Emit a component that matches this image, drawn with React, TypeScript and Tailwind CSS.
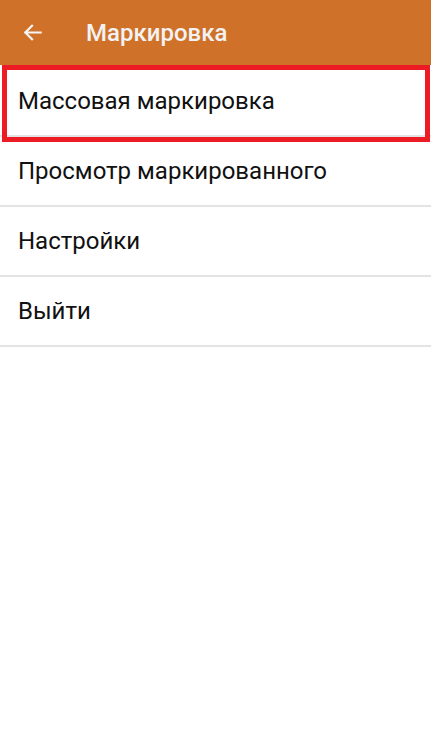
import React from "react";

const items = ["Массовая маркировка", "Просмотр маркированного", "Настройки", "Выйти"];

export default function App() {
  return (
    <div
      className="relative w-[431px] h-[739px] bg-white overflow-hidden"
      style={{ fontFamily: "Roboto, 'Noto Sans', sans-serif" }}
    >
      <header className="h-[65px] bg-[#cf7129] flex items-center">
        <div className="w-[86px] flex items-center pl-[21px]">
          <svg width="23" height="23" viewBox="0 0 24 24" fill="none">
            <path d="M20.5 12H4.5M11.5 5l-7 7 7 7" stroke="#f5f5f5" strokeWidth="2.3" strokeLinecap="square" />
          </svg>
        </div>
        <h1 className="text-[24px] font-medium text-[#f2f2f2] leading-none">Маркировка</h1>
      </header>
      <ul className="pt-[2px]">
        {items.map((t) => (
          <li key={t} className="h-[70px] flex items-center pl-[18px] border-b-2 border-[#e3e3e3]">
            <span className="text-[24px] text-[#111111] leading-none">{t}</span>
          </li>
        ))}
      </ul>
      <div className="absolute left-[2px] top-[65px] w-[428px] h-[77px] border-[5px] border-[#ed1c24] pointer-events-none" />
    </div>
  );
}
